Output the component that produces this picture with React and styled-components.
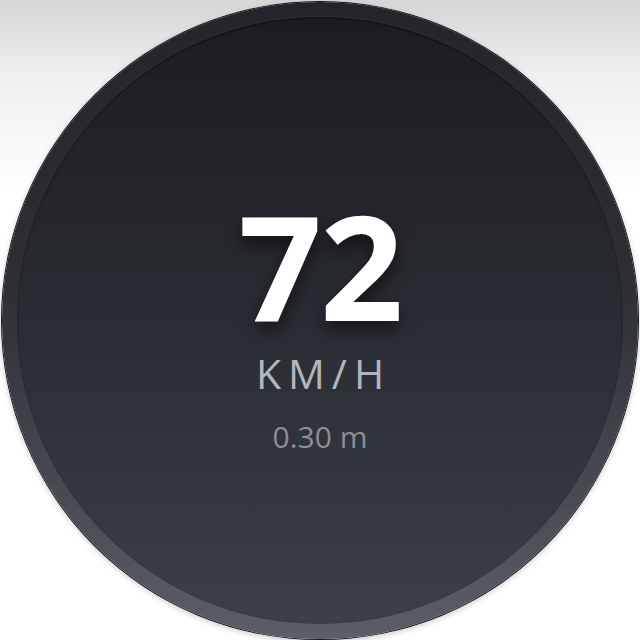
import React from "react";
import styled, { createGlobalStyle } from "styled-components";

const GlobalStyle = createGlobalStyle`
  html, body {
    margin: 0;
    padding: 0;
    width: 640px;
    height: 640px;
    overflow: hidden;
  }
  body {
    background: linear-gradient(180deg, #d6d6d6 0%, #efefef 12%, #ffffff 30%, #ffffff 100%);
    font-family: "Open Sans", "Noto Sans", sans-serif;
  }
`;

const Stage = styled.div`
  width: 640px;
  height: 640px;
  display: flex;
  align-items: center;
  justify-content: center;
`;

const Bezel = styled.div`
  width: 636px;
  height: 637px;
  border-radius: 50%;
  box-sizing: border-box;
  padding: 15px;
  display: flex;
  background: linear-gradient(180deg, #24252a 0%, #2d2f35 45%, #5b5e66 100%);
  box-shadow: 0 0 0 1px #15161a, 0 2px 6px rgba(0, 0, 0, 0.25);
`;

const Face = styled.div`
  flex: 1;
  border-radius: 50%;
  display: flex;
  flex-direction: column;
  align-items: center;
  justify-content: center;
  padding-top: 2px;
  box-sizing: border-box;
  background: linear-gradient(180deg, #1c1d22 0%, #2a2c33 50%, #3c3f47 100%);
  box-shadow: inset 0 1px 2px rgba(0, 0, 0, 0.5), 0 -1px 0 rgba(255, 255, 255, 0.05);
`;

const Speed = styled.div`
  color: #ffffff;
  font-size: 146px;
  font-weight: 700;
  line-height: 150px;
  letter-spacing: -2px;
  text-shadow: 0 8px 18px rgba(0, 0, 0, 0.55);
`;

const Unit = styled.div`
  margin-top: 11px;
  color: #b2b5ba;
  font-size: 41px;
  font-weight: 400;
  line-height: 44px;
  letter-spacing: 7px;
  padding-left: 7px;
`;

const Distance = styled.div`
  margin-top: 26px;
  color: #8b8e94;
  font-size: 30px;
  font-weight: 400;
  line-height: 32px;
`;

export default function App() {
  return (
    <>
      <GlobalStyle />
      <Stage>
        <Bezel>
          <Face>
            <Speed>72</Speed>
            <Unit>KM/H</Unit>
            <Distance>0.30 m</Distance>
          </Face>
        </Bezel>
      </Stage>
    </>
  );
}
